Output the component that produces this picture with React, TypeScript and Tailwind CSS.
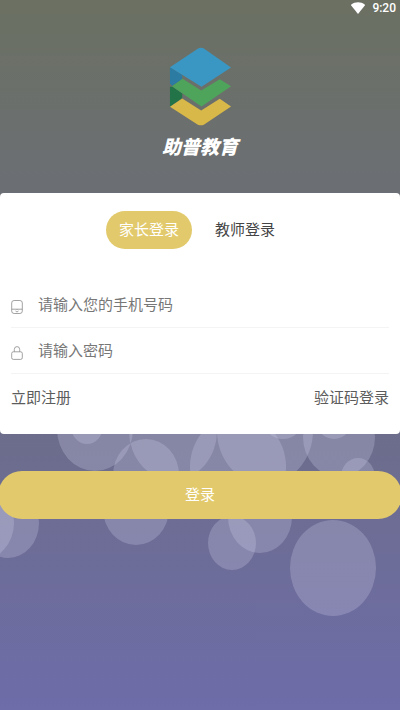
import React, { useState } from "react";
import clsx from "clsx";

type Bubble = { cx: number; cy: number; rx: number; ry: number };

const bubbles: Bubble[] = [
  { cx: 95, cy: 429, rx: 38, ry: 42 },
  { cx: 87, cy: 426, rx: 16, ry: 18 },
  { cx: 146, cy: 475, rx: 33, ry: 36 },
  { cx: 173, cy: 431, rx: 44, ry: 49 },
  { cx: 238, cy: 467, rx: 48, ry: 52 },
  { cx: 265, cy: 431, rx: 48, ry: 53 },
  { cx: 283, cy: 419, rx: 20, ry: 20 },
  { cx: 339, cy: 437, rx: 36, ry: 40 },
  { cx: 334, cy: 420, rx: 18, ry: 19 },
  { cx: 358, cy: 477, rx: 17, ry: 19 },
  { cx: -21, cy: 523, rx: 35, ry: 38 },
  { cx: 8, cy: 523, rx: 31, ry: 35 },
  { cx: 136, cy: 509, rx: 33, ry: 36 },
  { cx: 260, cy: 517, rx: 32, ry: 36 },
  { cx: 232, cy: 543, rx: 24, ry: 27 },
  { cx: 333, cy: 568, rx: 43, ry: 48 },
];

const tabs = ["家长登录", "教师登录"];

const Bubbles = () => (
  <svg
    aria-hidden="true"
    className="absolute inset-0 h-full w-full"
    preserveAspectRatio="none"
    viewBox="0 0 400 710"
  >
    {bubbles.map((bubble) => (
      <ellipse
        key={`${bubble.cx}-${bubble.cy}`}
        {...bubble}
        fill="#d0d0ea"
        fillOpacity="0.27"
      />
    ))}
  </svg>
);

const StatusBar = () => (
  <div className="flex h-4 items-center justify-end gap-1.5 pr-1 text-white">
    <svg aria-hidden="true" className="h-3 w-4" viewBox="0 0 16 12">
      <path
        d="M8 12 1.2 3.6C.9 3.2.9 2.7 1.3 2.4 3.2 1 5.5.3 8 .3s4.8.7 6.7 2.1c.4.3.4.8.1 1.2z"
        fill="currentColor"
      />
    </svg>

    <span className="font-['Roboto'] text-xs font-medium">9:20</span>
  </div>
);

const Logo = () => (
  <svg
    aria-hidden="true"
    className="h-[79px] w-[63px]"
    viewBox="86 36 188 238"
  >
    <path d="M88 96 125 120V133L95 153 88 146Z" fill="#2b7ba3" />

    <path d="M88 156 96 156 125 176V190L88 216Z" fill="#227347" />

    <path d="M94 154 126 132 182 167 238 133 272 154 183 215Z" fill="#4fa45b" />

    <path
      d="M174 40Q181 37 189 40L272 98 183 156 88 97Z"
      fill="#3a97c4"
    />

    <path
      d="M88 216 125 191 182 227 238 192 272 215 190 270Q182 274 172 270Z"
      fill="#d8b848"
    />
  </svg>
);

const PhoneIcon = () => (
  <svg
    aria-hidden="true"
    className="h-3.5 w-3 shrink-0 text-[#8c8c8c]"
    fill="none"
    stroke="currentColor"
    strokeWidth="0.8"
    viewBox="0 0 12 14"
  >
    <rect height="13" rx="2.4" width="10.6" x="0.7" y="0.5" />
    <path d="M0.7 9.2H11.3M4.5 11 6 12 7.5 11M6 9.2V10" />
  </svg>
);

const LockIcon = () => (
  <svg
    aria-hidden="true"
    className="h-3.5 w-3 shrink-0 text-[#8c8c8c]"
    fill="none"
    stroke="currentColor"
    strokeWidth="0.8"
    viewBox="0 0 12 14"
  >
    <rect height="7.6" rx="1.6" width="10.6" x="0.7" y="5.8" />
    <path d="M3.3 5.8V3.500a2.700 2.900 0 0 1 5.400 0V5.800" />
  </svg>
);

const Field = ({
  icon,
  id,
  label,
  type,
}: {
  icon: React.ReactNode;
  id: string;
  label: string;
  type: string;
}) => (
  <div className="flex h-[46px] items-center gap-[15px] border-b border-[#f4f4f4]">
    <label aria-label={label} className="pt-1" htmlFor={id}>
      {icon}
    </label>

    <input
      className="h-6 min-w-0 flex-1 bg-transparent text-[15px] leading-6 text-[#444] outline-none placeholder:text-[#777]"
      id={id}
      placeholder={label}
      type={type}
    />
  </div>
);

export default function App() {
  const [activeTab, setActiveTab] = useState(tabs[0]);

  return (
    <main className="relative min-h-screen overflow-hidden bg-linear-to-b from-[#6b7062] via-[#6c6d83] to-[#6e6ca9] font-['Roboto','Noto_Sans_CJK_SC',sans-serif]">
      <Bubbles />

      <div className="relative">
        <StatusBar />

        <header className="flex flex-col items-center gap-2 pt-[31px]">
          <Logo />

          <h1 className="text-[19px] leading-7 font-black text-white italic">
            助普教育
          </h1>
        </header>

        <form onSubmit={(event) => event.preventDefault()}>
          <section className="mt-[31px] rounded bg-white px-[11px] pt-[18px] pb-6">
            <div className="flex justify-center gap-2.5 pr-1.5">
              {tabs.map((tab) => (
                <button
                  key={tab}
                  className={clsx(
                    "h-[38px] rounded-full px-[13px] text-[15px] leading-6",
                    tab === activeTab
                      ? "bg-[#e2ca6c] text-white"
                      : "text-[#444]",
                  )}
                  type="button"
                  onClick={() => setActiveTab(tab)}
                >
                  {tab}
                </button>
              ))}
            </div>

            <div className="mt-[33px]">
              <Field
                icon={<PhoneIcon />}
                id="phone"
                label="请输入您的手机号码"
                type="tel"
              />

              <Field
                icon={<LockIcon />}
                id="password"
                label="请输入密码"
                type="password"
              />
            </div>

            <div className="mt-3 flex justify-between text-[15px] leading-6 text-[#5c5c5c]">
              <a href="#register">立即注册</a>

              <a href="#code">验证码登录</a>
            </div>
          </section>

          <div className="-mx-0.5 mt-[37px]">
            <button
              className="h-12 w-full rounded-full bg-[#e2ca6c] text-[15px] leading-6 text-white"
              type="submit"
            >
              登录
            </button>
          </div>
        </form>
      </div>
    </main>
  );
}
